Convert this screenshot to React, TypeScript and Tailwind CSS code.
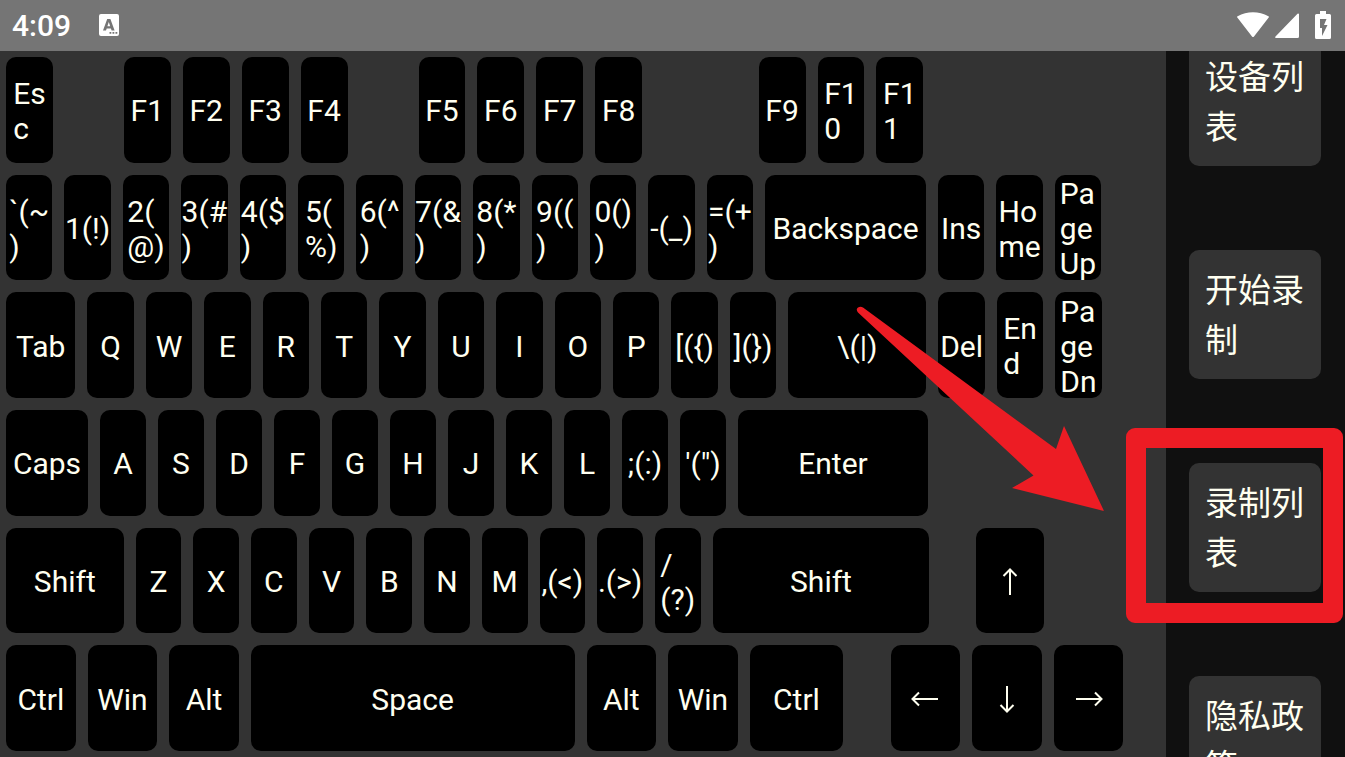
import React from 'react';

// weight is the share of the row that the cell takes; a cell without a label is a blank gap
interface KeyCell {
  label?: string;
  weight: number;
}

const key = (label: string, weight: number): KeyCell => ({ label, weight });
const gap = (weight: number): KeyCell => ({ weight });
const keys = (labels: string[], weight: number): KeyCell[] => labels.map(label => key(label, weight));

const rows: KeyCell[][] = [
  [
    key('Es\nc', 589),
    gap(590),
    ...keys(['F1', 'F2', 'F3', 'F4'], 589),
    gap(590),
    ...keys(['F5', 'F6', 'F7', 'F8'], 589),
    gap(1045),
    ...keys(['F9', 'F1\n0', 'F1\n1'], 589),
    gap(2367)
  ],
  [
    ...keys(
      ['`(~\n)', '1(!)', '2(\n@)', '3(#\n)', '4($\n)', '5(\n%)', '6(^\n)', '7(&\n)', '8(*\n)', '9((\n)', '0()\n)', '-(_)', '=(+\n)'],
      584
    ),
    key('Backspace', 1728),
    ...keys(['Ins', 'Ho\nme', 'Pa\nge\nUp'], 584),
    gap(588)
  ],
  [
    key('Tab', 814),
    ...keys(['Q', 'W', 'E', 'R', 'T', 'Y', 'U', 'I', 'O', 'P', '[({)', '](})'], 584),
    key('\\(|)', 1502),
    ...keys(['Del', 'En\nd', 'Pa\nge\nDn'], 584),
    gap(584)
  ],
  [
    key('Caps', 940),
    ...keys(['A', 'S', 'D', 'F', 'G', 'H', 'J', 'K', 'L', ';(:)', '\'(")'], 580),
    key('Enter', 2020),
    gap(2320)
  ],
  [
    key('Shift', 1296),
    ...keys(['Z', 'X', 'C', 'V', 'B', 'N', 'M', ',(<)', '.(>)', '/\n(?)'], 577),
    key('Shift', 2288),
    gap(346),
    key('↑', 800),
    gap(1160)
  ],
  [
    ...keys(['Ctrl', 'Win', 'Alt'], 816),
    key('Space', 3357),
    ...keys(['Alt', 'Win'], 816),
    key('Ctrl', 1056),
    gap(354),
    ...keys(['←', '↓', '→'], 816),
    gap(365)
  ]
];

const menuItems = ['设备列表', '开始录制', '录制列表', '隐私政策'];

const arrowPaths: Record<string, string> = {
  '↑': 'M14 27V2M7.500 8l6.500-6.500L20.500 8',
  '↓': 'M14 1v25M7.500 20l6.500 6.500 6.500-6.500',
  '←': 'M27 14H2M8 7.500L1.500 14 8 20.500',
  '→': 'M1 14h25M20 7.500l6.500 6.500-6.500 6.500'
};

const columns = (row: KeyCell[]) => row.map(cell => `minmax(0, ${cell.weight}fr)`).join(' ');

function KeyLabel({ label }: { label: string }) {
  const arrow = arrowPaths[label];
  if (arrow) {
    return (
      <svg viewBox="0 0 28 28" className="w-7 h-7" fill="none" stroke="currentColor" strokeWidth="2">
        <path d={arrow} />
      </svg>
    );
  }
  return <span className="whitespace-pre text-left">{label}</span>;
}

function Keyboard() {
  return (
    <section aria-label="Keyboard" className="flex-1 min-w-0 flex flex-col bg-[#333333]">
      {rows.map((row, rowIndex) => (
        <div
          key={rowIndex}
          className="flex-1 min-h-0 grid grid-rows-[minmax(0,1fr)]"
          style={{ gridTemplateColumns: columns(row) }}
        >
          {row.map((cell, index) => (
            <div key={index} className="min-h-0 p-[6px] flex">
              {cell.label && (
                <button
                  type="button"
                  aria-label={cell.label.replace(/\n/g, '')}
                  className="flex-1 min-w-0 flex items-center justify-center overflow-hidden rounded-[10px] bg-black pt-[2px] text-[30px] leading-[35px] text-[#fffff0]"
                >
                  <KeyLabel label={cell.label} />
                </button>
              )}
            </div>
          ))}
        </div>
      ))}
    </section>
  );
}

function SideMenu() {
  return (
    <nav className="w-[179px] shrink-0 overflow-hidden bg-[#101010] pl-[23px] pr-6">
      <div className="-mt-[14px] flex flex-col gap-[84px]">
        {menuItems.map(item => (
          <button
            key={item}
            type="button"
            className="shrink-0 rounded-[10px] bg-[#333333] px-4 pt-4 pb-[13px] text-left text-[33px] leading-[50px] text-[#fffff0]"
          >
            {item}
          </button>
        ))}
      </div>
    </nav>
  );
}

function StatusBar() {
  return (
    <header className="h-[51px] shrink-0 flex items-center bg-[#757575] pl-3 pr-[14px] pb-px text-white">
      <span className="text-[30px] font-medium leading-[35px]">4:09</span>
      <svg viewBox="0 0 20 22" className="ml-7 w-5 h-[22px]">
        <path
          fill="currentColor"
          fillRule="evenodd"
          d="M2 0h16a2 2 0 0 1 2 2v18a2 2 0 0 1-2 2H2a2 2 0 0 1-2-2V2a2 2 0 0 1 2-2zM8.200 5L4 16.500h3l.7-2.100h4.200l.7 2.100h3L11.400 5zM9.800 8l1.400 4.200H8.400zM10.500 18v1.800h1.800V18zm3 0v1.800h1.800V18zm3 0v1.800h1.800V18z"
        />
      </svg>
      <div className="ml-auto flex items-center">
        <svg viewBox="0 0 32 26" className="w-8 h-[26px]" fill="currentColor">
          <path d="M.3 5.500Q-.3 4.800.6 4.200C10-1.200 22-1.200 31.400 4.200q.9.600.3 1.300L17 24.500q-1 1-2 0z" />
        </svg>
        <svg viewBox="0 0 24 25" className="ml-[6px] w-6 h-[25px]" fill="currentColor">
          <path d="M24 1v22.500q0 1.500-1.500 1.500H1q-1.500-.5-.5-1.500L22.500.8q1-.8 1.500.2z" />
        </svg>
        <svg viewBox="0 0 16 28" className="ml-4 w-4 h-7">
          <path
            fill="currentColor"
            fillRule="evenodd"
            d="M5 0h6v3h3.500Q16 3 16 4.500v22q0 1.500-1.500 1.500h-13Q0 28 0 26.500v-22Q0 3 1.500 3H5zM5 8v9h2v8l5.500-11H9l2.500-6z"
          />
        </svg>
      </div>
    </header>
  );
}

export default function App() {
  return (
    <div className="relative h-screen flex flex-col overflow-hidden font-[Roboto,'Noto_Sans_CJK_SC',sans-serif]">
      <StatusBar />
      <main className="flex-1 min-h-0 flex">
        <Keyboard />
        <SideMenu />
      </main>

      {/* Highlight over the recordings entry, with the arrow that points at it */}
      <svg
        viewBox="0 0 250 206"
        className="pointer-events-none absolute right-[240px] top-[306px] w-[250px] h-[206px]"
        fill="#ed1c24"
      >
        <path d="M8 1.500L201 143l8-23 40 85-92-23 21.500-12.500L3 6.500Q.5 3 3 1.500T8 1.500z" />
      </svg>
      <div className="pointer-events-none absolute right-[2px] top-[428px] w-[217px] h-[195px] rounded-[9px] border-[20px] border-[#ed1c24]" />
    </div>
  );
}
